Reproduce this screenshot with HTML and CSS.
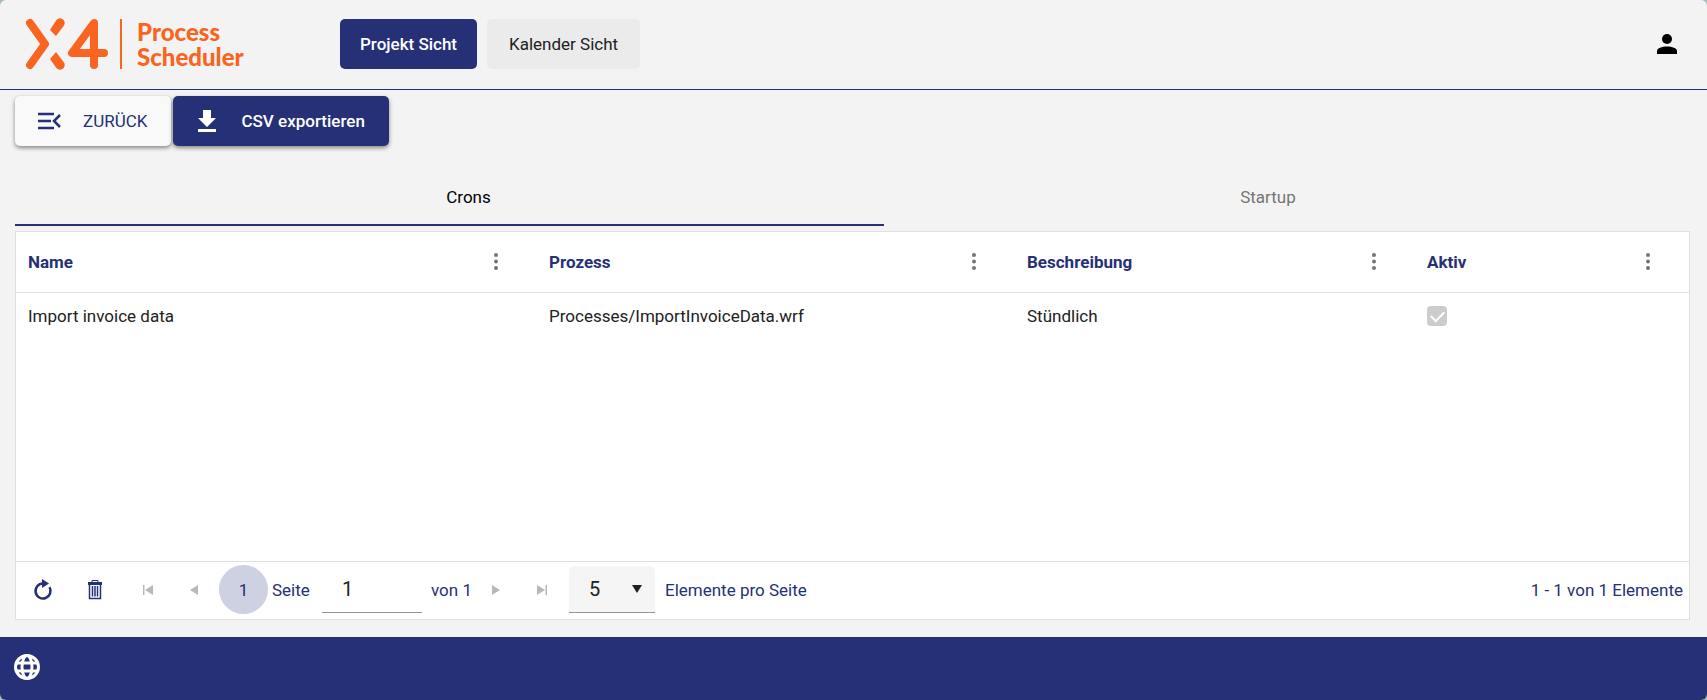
FILE: index.html
```html
<!DOCTYPE html>
<html lang="de">
  <head>
    <meta charset="UTF-8" />
    <meta name="viewport" content="width=device-width, initial-scale=1" />
    <title>X4 Process Scheduler</title>
    <link rel="stylesheet" href="styles.css">
  </head>
  <body>
    <header class="header">
      <a class="logo" href="#">
        <svg class="logo-mark" viewBox="0 0 84 52" aria-hidden="true">
          <g fill="none" stroke="#f96420" stroke-width="8" stroke-linecap="round" stroke-linejoin="round">
            <path d="M5 5 20 26 5 47" />
            <path d="M69 47V5L47 35h32" />
          </g>
          <path d="M25 12l6-9.500a4.600 4.600 0 0 1 8 5L31 18z" fill="#f96420" />
          <path d="M31 34l8 10.500a4.600 4.600 0 0 1-8 5L25 41z" fill="#f96420" />
        </svg>
        <span class="logo-text">Process<br />Scheduler</span>
      </a>
      <nav class="views">
        <button class="view-btn active" type="button">Projekt Sicht</button>
        <button class="view-btn" type="button">Kalender Sicht</button>
      </nav>
      <button class="icon-btn user-btn" type="button" aria-label="Benutzer">
        <svg width="20" height="20" viewBox="0 0 20 20"><circle cx="10" cy="5" r="5" /><path d="M0 20v-3c0-6 20-6 20 0v3z" /></svg>
      </button>
    </header>

    <main class="content">
      <div class="toolbar">
        <button class="tool-btn" type="button">
          <svg width="24" height="24" viewBox="0 0 24 24" fill="none" stroke="currentColor" stroke-width="2.500">
            <path d="M1 5h16M1 12h13M1 19h16M23 6l-6 6 6 6" />
          </svg>
          ZURÜCK
        </button>
        <button class="tool-btn primary" type="button">
          <svg width="24" height="24" viewBox="0 0 24 24" fill="currentColor">
            <path d="M8 1h8v8h5l-9 9-9-9h5zM3 20h18v3H3z" />
          </svg>
          CSV exportieren
        </button>
      </div>

      <div class="tabs" role="tablist">
        <button class="tab active" type="button" role="tab" aria-selected="true">Crons</button>
        <button class="tab" type="button" role="tab" aria-selected="false">Startup</button>
      </div>

      <section class="grid">
        <table class="grid-table">
          <colgroup>
            <col class="col-name" />
            <col class="col-process" />
            <col class="col-description" />
            <col class="col-active" />
          </colgroup>
          <thead>
            <tr>
              <th scope="col">
                <div class="th-inner">Name
                  <button class="icon-btn menu-btn" type="button" aria-label="Spaltenmenü Name">
                    <svg width="4" height="17" viewBox="0 0 4 17"><circle cx="2" cy="2" r="2" /><circle cx="2" cy="8.500" r="2" /><circle cx="2" cy="15" r="2" /></svg>
                  </button>
                </div>
              </th>
              <th scope="col">
                <div class="th-inner">Prozess
                  <button class="icon-btn menu-btn" type="button" aria-label="Spaltenmenü Prozess">
                    <svg width="4" height="17" viewBox="0 0 4 17"><circle cx="2" cy="2" r="2" /><circle cx="2" cy="8.500" r="2" /><circle cx="2" cy="15" r="2" /></svg>
                  </button>
                </div>
              </th>
              <th scope="col">
                <div class="th-inner">Beschreibung
                  <button class="icon-btn menu-btn" type="button" aria-label="Spaltenmenü Beschreibung">
                    <svg width="4" height="17" viewBox="0 0 4 17"><circle cx="2" cy="2" r="2" /><circle cx="2" cy="8.500" r="2" /><circle cx="2" cy="15" r="2" /></svg>
                  </button>
                </div>
              </th>
              <th scope="col">
                <div class="th-inner">Aktiv
                  <button class="icon-btn menu-btn" type="button" aria-label="Spaltenmenü Aktiv">
                    <svg width="4" height="17" viewBox="0 0 4 17"><circle cx="2" cy="2" r="2" /><circle cx="2" cy="8.500" r="2" /><circle cx="2" cy="15" r="2" /></svg>
                  </button>
                </div>
              </th>
            </tr>
          </thead>
          <tbody>
            <tr>
              <td>Import invoice data</td>
              <td>Processes/ImportInvoiceData.wrf</td>
              <td>Stündlich</td>
              <td><input class="checkbox" type="checkbox" aria-label="Aktiv" checked disabled /></td>
            </tr>
          </tbody>
        </table>

        <div class="pager">
          <div class="pager-tools">
            <button class="icon-btn pager-tool" type="button" aria-label="Aktualisieren">
              <svg width="20" height="22" viewBox="0 0 20 22">
                <path d="M10 4.500a7.500 7.500 0 1 0 6.500 3.700" fill="none" stroke="currentColor" stroke-width="2.500" />
                <path d="M9 0l7 4.500L9 9z" fill="currentColor" />
              </svg>
            </button>
            <button class="icon-btn pager-tool" type="button" aria-label="Löschen">
              <svg width="16" height="20" viewBox="0 0 16 20" fill="none" stroke="currentColor">
                <path d="M5 2.500v-2h6v2" />
                <path d="M1 3.500h14" stroke-width="3" />
                <path d="M2.500 5v13.500h11V5M5.500 6v10.500M8 6v10.500M10.500 6v10.500" stroke-width="1.500" />
              </svg>
            </button>
          </div>
          <button class="icon-btn pager-nav" type="button" aria-label="Erste Seite" disabled>
            <svg width="10" height="10" viewBox="0 0 10 10"><path d="M0 0h1.500v10H0zM10 0v10L2 5z" /></svg>
          </button>
          <button class="icon-btn pager-nav" type="button" aria-label="Vorherige Seite" disabled>
            <svg width="10" height="10" viewBox="0 0 10 10"><path d="M9 0v10L1 5z" /></svg>
          </button>
          <button class="page-number" type="button">1</button>
          <label class="page-label" for="page">Seite</label>
          <input class="page-input" id="page" type="text" value="1" />
          <span class="page-total">von 1</span>
          <button class="icon-btn pager-nav" type="button" aria-label="Nächste Seite" disabled>
            <svg width="10" height="10" viewBox="0 0 10 10"><path d="M1 0v10l8-5z" /></svg>
          </button>
          <button class="icon-btn pager-nav" type="button" aria-label="Letzte Seite" disabled>
            <svg width="10" height="10" viewBox="0 0 10 10"><path d="M8.500 0H10v10H8.500zM0 0v10l8-5z" /></svg>
          </button>
          <div class="size-select">
            <select id="page-size">
              <option selected>5</option>
              <option>10</option>
              <option>20</option>
            </select>
            <svg class="size-arrow" width="10" height="8" viewBox="0 0 10 8"><path d="M0 0h10L5 8z" /></svg>
          </div>
          <label for="page-size">Elemente pro Seite</label>
          <span class="pager-info">1 - 1 von 1 Elemente</span>
        </div>
      </section>
    </main>

    <footer class="footer">
      <button class="icon-btn language-btn" type="button" aria-label="Sprache">
        <svg width="26" height="26" viewBox="0 0 26 26" fill="none" stroke="currentColor" stroke-width="3">
          <circle cx="13" cy="13" r="11.500" />
          <ellipse cx="13" cy="13" rx="5" ry="11.500" />
          <path d="M2 9h22M2 17h22" />
        </svg>
      </button>
    </footer>
  </body>
</html>
```
FILE: styles.css
```css
* {
  margin: 0;
  padding: 0;
  box-sizing: border-box;
}

html {
  background-color: #a3bcbd;
}

body {
  display: flex;
  flex-direction: column;
  min-height: 100vh;
  overflow: hidden;
  border-radius: 6px;
  background-color: #f3f3f3;
  color: #212121;
  font-family: Roboto, "Liberation Sans", sans-serif;
  font-size: 17px;
  line-height: 24px;
}

button,
input,
select {
  font: inherit;
  color: inherit;
}

button {
  border: none;
  background: none;
  cursor: pointer;
}

svg {
  display: block;
}

.icon-btn {
  display: flex;
  align-items: center;
  justify-content: center;
  flex-shrink: 0;
}

/* Header */
.header {
  display: flex;
  align-items: center;
  height: 90px;
  padding: 0 30px 1px 25px;
  border-bottom: 1px solid #263077;
}

.logo {
  display: flex;
  align-items: center;
  width: 315px;
  color: #f96420;
  text-decoration: none;
}

.logo-mark {
  width: 84px;
  height: 52px;
}

.logo-text {
  margin-left: 11px;
  padding-left: 15px;
  border-left: 2px solid #f96420;
  font-family: Lato, sans-serif;
  font-size: 24px;
  font-weight: 900;
  line-height: 25px;
}

.views {
  display: flex;
  gap: 10px;
}

.view-btn {
  height: 50px;
  padding: 0 22px;
  border-radius: 5px;
  background-color: #ebebeb;
}

.view-btn.active {
  padding: 0 20px;
  background-color: #263077;
  color: #fff;
  font-weight: 500;
}

.user-btn {
  width: 20px;
  height: 20px;
  margin-left: auto;
  color: #000;
}

/* Content */
.content {
  display: flex;
  flex-direction: column;
  flex: 1;
  padding: 6px 17px 17px 15px;
}

.toolbar {
  display: flex;
  gap: 2px;
}

.tool-btn {
  display: flex;
  align-items: center;
  gap: 22px;
  height: 50px;
  padding: 0 24px 0 22px;
  border-radius: 5px;
  background-color: #f9f9f9;
  box-shadow: 0 2px 4px rgba(0, 0, 0, 0.45);
  color: #263077;
}

.tool-btn.primary {
  background-color: #263077;
  color: #fff;
  font-weight: 500;
}

.tabs {
  display: grid;
  grid-template-columns: 869fr 806fr;
  margin: 20px 0 5px;
}

.tab {
  height: 60px;
  padding: 4px 38px 0 0;
  border-bottom: 2px solid transparent;
  color: #757575;
}

.tab.active {
  padding: 4px 0 0 38px;
  border-bottom-color: #263077;
  color: #000;
}

/* Grid */
.grid {
  display: flex;
  flex-direction: column;
  justify-content: space-between;
  flex: 1;
  border: 1px solid #dfdfdf;
  background-color: #fff;
}

.grid-table {
  width: 100%;
  table-layout: fixed;
  border-collapse: collapse;
}

.col-name {
  width: 521px;
}

.col-process {
  width: 478px;
}

.col-description {
  width: 400px;
}

.col-active {
  width: 274px;
}

.grid-table th {
  height: 60px;
  padding: 0 31px 0 12px;
  border-bottom: 1px solid #dfdfdf;
  color: #263077;
  font-weight: 700;
  text-align: left;
}

.th-inner {
  display: flex;
  align-items: center;
  justify-content: space-between;
}

.menu-btn {
  width: 20px;
  height: 24px;
  fill: #757575;
}

.grid-table td {
  height: 48px;
  padding: 0 12px;
}

.checkbox {
  display: grid;
  place-items: center;
  width: 20px;
  height: 20px;
  border-radius: 4px;
  background-color: #ccc;
  appearance: none;
}

.checkbox::before {
  content: "";
  width: 11px;
  height: 6px;
  margin-bottom: 3px;
  border: solid #fff;
  border-width: 0 0 2px 2px;
  transform: rotate(-45deg);
}

/* Pager */
.pager {
  display: flex;
  align-items: center;
  height: 58px;
  padding: 0 6px 2px 11px;
  border-top: 1px solid #dfdfdf;
  color: #263077;
}

.pager-tools {
  display: flex;
  gap: 20px;
  margin-right: 14px;
}

.pager-tool {
  width: 32px;
  height: 32px;
}

.pager-nav {
  width: 46px;
  height: 46px;
  fill: #b8b8b8;
  cursor: default;
}

.page-number {
  width: 49px;
  height: 49px;
  margin-left: 2px;
  border-radius: 50%;
  background-color: #ced1e1;
}

.page-label {
  width: 54px;
  padding-left: 4px;
}

.page-input {
  width: 100px;
  height: 47px;
  padding: 0 20px;
  border: none;
  border-bottom: 1px solid #949494;
  color: #212121;
  font-size: 20px;
}

.page-total {
  width: 51px;
  padding-left: 9px;
}

.size-select {
  position: relative;
  width: 86px;
  margin: 0 10px 0 4px;
}

.size-select select {
  width: 100%;
  height: 47px;
  padding: 0 20px;
  border: none;
  border-bottom: 1px solid #949494;
  border-radius: 5px 5px 0 0;
  background-color: #f5f5f5;
  color: #212121;
  font-size: 20px;
  appearance: none;
}

.size-arrow {
  position: absolute;
  top: 19px;
  right: 13px;
  fill: #212121;
  pointer-events: none;
}

.pager-info {
  margin-left: auto;
}

/* Footer */
.footer {
  display: flex;
  align-items: center;
  height: 63px;
  padding: 0 14px 4px;
  background-color: #263077;
  color: #fff;
}
```
